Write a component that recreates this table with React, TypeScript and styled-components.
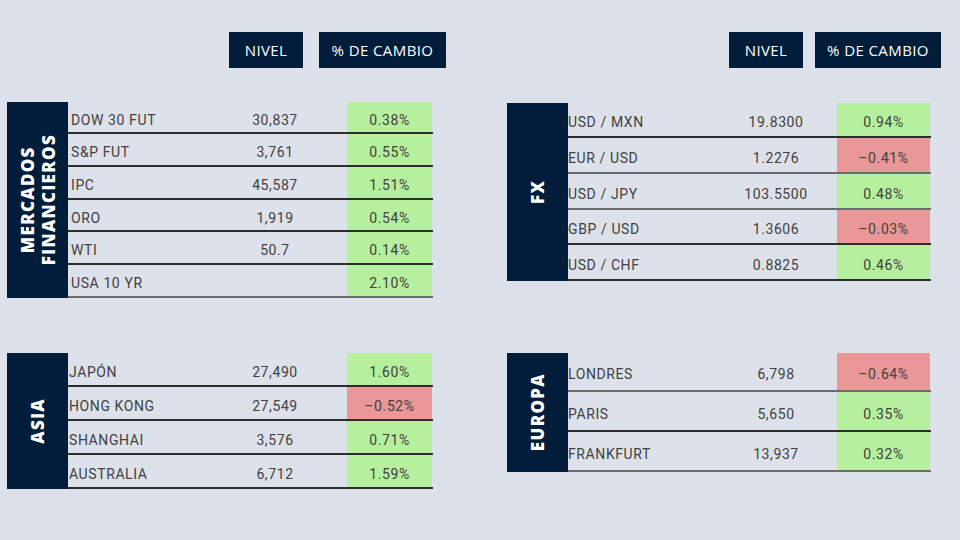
import React from "react";
import styled, { createGlobalStyle } from "styled-components";

const Global = createGlobalStyle`
  html, body { margin: 0; padding: 0; background: #dde1ea; }
  body { font-family: Roboto, "Liberation Sans", sans-serif; }
`;

const NAVY = "#011d39";

const Page = styled.div`
  width: 960px;
  height: 540px;
  box-sizing: border-box;
  padding-top: 32px;
  display: grid;
  grid-template-columns: 500px 460px;
  background: #dde1ea;
  overflow: hidden;
`;

const Column = styled.div`
  display: flex;
  flex-direction: column;
  padding-left: 7px;
`;

const HeaderRow = styled.div<{ $gap: number }>`
  display: flex;
  gap: ${(p) => p.$gap}px;
  margin-left: 222px;
  height: 36px;
`;

const HeaderCell = styled.div<{ $w: number }>`
  width: ${(p) => p.$w}px;
  height: 36px;
  background: ${NAVY};
  color: #ffffff;
  font-family: "Open Sans", "Liberation Sans", sans-serif;
  font-size: 15px;
  letter-spacing: 0.4px;
  display: flex;
  align-items: center;
  justify-content: center;
`;

const Panel = styled.div<{ $top: number }>`
  display: flex;
  align-items: stretch;
  margin-top: ${(p) => p.$top}px;
`;

const Label = styled.div`
  width: 61px;
  flex: none;
  background: ${NAVY};
  display: flex;
  align-items: center;
  justify-content: center;
`;

const LabelText = styled.div`
  writing-mode: vertical-rl;
  transform: rotate(180deg);
  color: #ffffff;
  font-family: "Open Sans", "Liberation Sans", sans-serif;
  font-weight: 800;
  font-size: 17px;
  line-height: 21px;
  letter-spacing: 1.3px;
  text-align: center;
  white-space: nowrap;
`;

const Table = styled.div<{ $w: number }>`
  width: ${(p) => p.$w}px;
  display: flex;
  flex-direction: column;
`;

const Row = styled.div<{ $h: number; $cols: string; $line: string }>`
  display: grid;
  grid-template-columns: ${(p) => p.$cols};
  height: ${(p) => p.$h}px;
  box-sizing: border-box;
  border-bottom: 2px solid ${(p) => p.$line};
  color: #414141;
  font-size: 14px;
  letter-spacing: 0.6px;
`;

const Name = styled.div<{ $pad: number }>`
  display: flex;
  align-items: center;
  padding: 5px 0 0 ${(p) => p.$pad}px;
  white-space: nowrap;
`;

const Level = styled.div`
  display: flex;
  align-items: center;
  justify-content: center;
  padding-top: 5px;
`;

const Pct = styled.div<{ $neg: boolean }>`
  display: flex;
  align-items: center;
  justify-content: center;
  padding-top: 5px;
  background: ${(p) => (p.$neg ? "#e99797" : "#b6f09e")};
`;

type R = { n: string; v: string; p: string; h: number; line?: "dark" | "gray" };

const DARK = "#2c2c2c";
const GRAY = "#6c6c6e";

const mercados: R[] = [
  { n: "DOW 30 FUT", v: "30,837", p: "0.38%", h: 32 },
  { n: "S&P FUT", v: "3,761", p: "0.55%", h: 33 },
  { n: "IPC", v: "45,587", p: "1.51%", h: 33 },
  { n: "ORO", v: "1,919", p: "0.54%", h: 32 },
  { n: "WTI", v: "50.7", p: "0.14%", h: 33 },
  { n: "USA 10 YR", v: "", p: "2.10%", h: 33, line: "gray" },
];

const fx: R[] = [
  { n: "USD / MXN", v: "19.8300", p: "0.94%", h: 35 },
  { n: "EUR / USD", v: "1.2276", p: "–0.41%", h: 36, line: "gray" },
  { n: "USD / JPY", v: "103.5500", p: "0.48%", h: 36, line: "gray" },
  { n: "GBP / USD", v: "1.3606", p: "–0.03%", h: 35 },
  { n: "USD / CHF", v: "0.8825", p: "0.46%", h: 36 },
];

const asia: R[] = [
  { n: "JAPÓN", v: "27,490", p: "1.60%", h: 34 },
  { n: "HONG KONG", v: "27,549", p: "–0.52%", h: 34 },
  { n: "SHANGHAI", v: "3,576", p: "0.71%", h: 34 },
  { n: "AUSTRALIA", v: "6,712", p: "1.59%", h: 34 },
];

const europa: R[] = [
  { n: "LONDRES", v: "6,798", p: "–0.64%", h: 39, line: "gray" },
  { n: "PARIS", v: "5,650", p: "0.35%", h: 40 },
  { n: "FRANKFURT", v: "13,937", p: "0.32%", h: 40, line: "gray" },
];

function DataPanel({
  label,
  rows,
  top,
  width,
  cols,
  pad,
}: {
  label: React.ReactNode;
  rows: R[];
  top: number;
  width: number;
  cols: string;
  pad: number;
}) {
  return (
    <Panel $top={top}>
      <Label>
        <LabelText>{label}</LabelText>
      </Label>
      <Table $w={width}>
        {rows.map((r) => (
          <Row key={r.n} $h={r.h} $cols={cols} $line={r.line === "gray" ? GRAY : DARK}>
            <Name $pad={pad}>{r.n}</Name>
            <Level>{r.v}</Level>
            <Pct $neg={r.p.startsWith("–")}>{r.p}</Pct>
          </Row>
        ))}
      </Table>
    </Panel>
  );
}

export default function App() {
  const leftCols = "135px 144px 85px 1px";
  const rightCols = "147px 122px 93px 1px";
  return (
    <>
      <Global />
      <Page>
        <Column>
          <HeaderRow $gap={16}>
            <HeaderCell $w={74}>NIVEL</HeaderCell>
            <HeaderCell $w={127}>% DE CAMBIO</HeaderCell>
          </HeaderRow>
          <DataPanel
            label={<>MERCADOS<br />FINANCIEROS</>}
            rows={mercados}
            top={34}
            width={365}
            cols={leftCols}
            pad={3}
          />
          <DataPanel label="ASIA" rows={asia} top={55} width={365} cols={leftCols} pad={1} />
        </Column>
        <Column>
          <HeaderRow $gap={12}>
            <HeaderCell $w={74}>NIVEL</HeaderCell>
            <HeaderCell $w={126}>% DE CAMBIO</HeaderCell>
          </HeaderRow>
          <DataPanel label="FX" rows={fx} top={35} width={363} cols={rightCols} pad={0} />
          <DataPanel label="EUROPA" rows={europa} top={72} width={363} cols={rightCols} pad={0} />
        </Column>
      </Page>
    </>
  );
}
